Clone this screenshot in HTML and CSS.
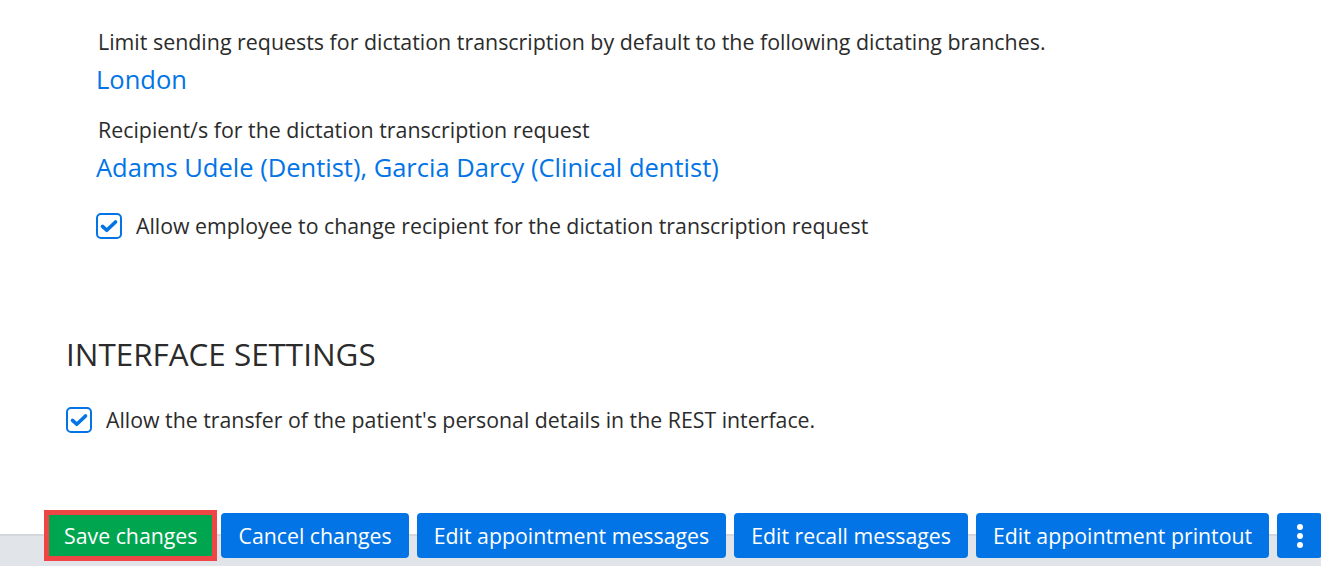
FILE: index.html
```html
<!DOCTYPE html>
<html lang="en">
<head>
    <meta charset="UTF-8">
    <meta name="viewport" content="width=device-width, initial-scale=1.0">
    <title>Settings</title>
    <link rel="stylesheet" href="styles.css">
</head>
<body>
    <main class="settings">
        <section class="group group-nested">
            <div class="field">
                <div class="field-label">Limit sending requests for dictation transcription by default to the following dictating branches.</div>
                <a class="field-value" href="#">London</a>
            </div>

            <div class="field">
                <div class="field-label">Recipient/s for the dictation transcription request</div>
                <a class="field-value" href="#">Adams Udele (Dentist), Garcia Darcy (Clinical dentist)</a>
            </div>

            <label class="check check-spaced">
                <span class="check-box">
                    <svg viewBox="0 0 16 16" width="20" height="20"><path d="M2.8 8.3l3.4 3.1 7-6.6" fill="none" stroke="currentColor" stroke-width="2.9" stroke-linecap="round" stroke-linejoin="round"/></svg>
                </span>
                Allow employee to change recipient for the dictation transcription request
            </label>
        </section>

        <section class="group">
            <h2 class="group-title">INTERFACE SETTINGS</h2>
            <label class="check">
                <span class="check-box">
                    <svg viewBox="0 0 16 16" width="20" height="20"><path d="M2.8 8.3l3.4 3.1 7-6.6" fill="none" stroke="currentColor" stroke-width="2.9" stroke-linecap="round" stroke-linejoin="round"/></svg>
                </span>
                Allow the transfer of the patient's personal details in the REST interface.
            </label>
        </section>
    </main>

    <footer class="action-bar">
        <button class="btn btn-save">Save changes</button>
        <button class="btn">Cancel changes</button>
        <button class="btn">Edit appointment messages</button>
        <button class="btn">Edit recall messages</button>
        <button class="btn">Edit appointment printout</button>
        <button class="btn btn-more" aria-label="More">
            <svg viewBox="0 0 8 26" width="8" height="26"><circle cx="4" cy="4" r="3" fill="currentColor"/><circle cx="4" cy="13" r="3" fill="currentColor"/><circle cx="4" cy="22" r="3" fill="currentColor"/></svg>
        </button>
    </footer>
</body>
</html>
```

FILE: styles.css
```css
:root {
    --text: #2b2b2b;
    --blue: #0274e6;
    --green: #00a64f;
    --bar: #e1e4e8;
}

body {
    margin: 0;
    background: #fff;
    color: var(--text);
    font-family: "Open Sans", "Noto Sans", sans-serif;
    overflow: hidden;
}

/* Settings content */
.settings {
    box-sizing: border-box;
    padding: 28px 0 0 66px;
    height: 478px;
}

.group-nested {
    padding-left: 30px;
}

.field {
    margin-bottom: 19px;
}

.field-label {
    font-size: 21.4px;
    line-height: 28px;
    padding-left: 2px;
}

.field-value {
    display: block;
    color: var(--blue);
    text-decoration: none;
    font-size: 25.5px;
    line-height: 36px;
    margin-top: 5px;
}

.group-title {
    font-weight: 400;
    font-size: 31.4px;
    line-height: 40px;
    margin: 94px 0 32px 0;
}

/* Checkbox rows */
.check {
    display: flex;
    align-items: center;
    gap: 14px;
    font-size: 21.3px;
    line-height: 28px;
}

.check-spaced {
    margin-top: 27px;
}

.check-box {
    width: 26px;
    height: 26px;
    box-sizing: border-box;
    border: 2px solid var(--blue);
    border-radius: 5px;
    color: var(--blue);
    display: flex;
    align-items: center;
    justify-content: center;
    flex-shrink: 0;
}

/* Bottom action bar */
.action-bar {
    display: flex;
    align-items: center;
    gap: 8px;
    padding: 27px 0 0 49px;
    height: 88px;
    box-sizing: border-box;
    background: linear-gradient(to bottom, #fff 0 56px, #d4d8dd 56px 58px, var(--bar) 58px);
}

.btn {
    height: 45px;
    padding: 0 17px;
    border: 0;
    border-radius: 4px;
    background: var(--blue);
    color: #fff;
    font-family: inherit;
    font-size: 21.3px;
    white-space: nowrap;
    cursor: pointer;
    flex-shrink: 0;
}

.btn-save {
    height: 41px;
    padding: 0 15px;
    border-radius: 0;
    background: var(--green);
    outline: 5px solid #f04545;
    margin-right: 1px;
}

.btn-more {
    width: 45px;
    padding: 0;
    display: flex;
    align-items: center;
    justify-content: center;
}
```
